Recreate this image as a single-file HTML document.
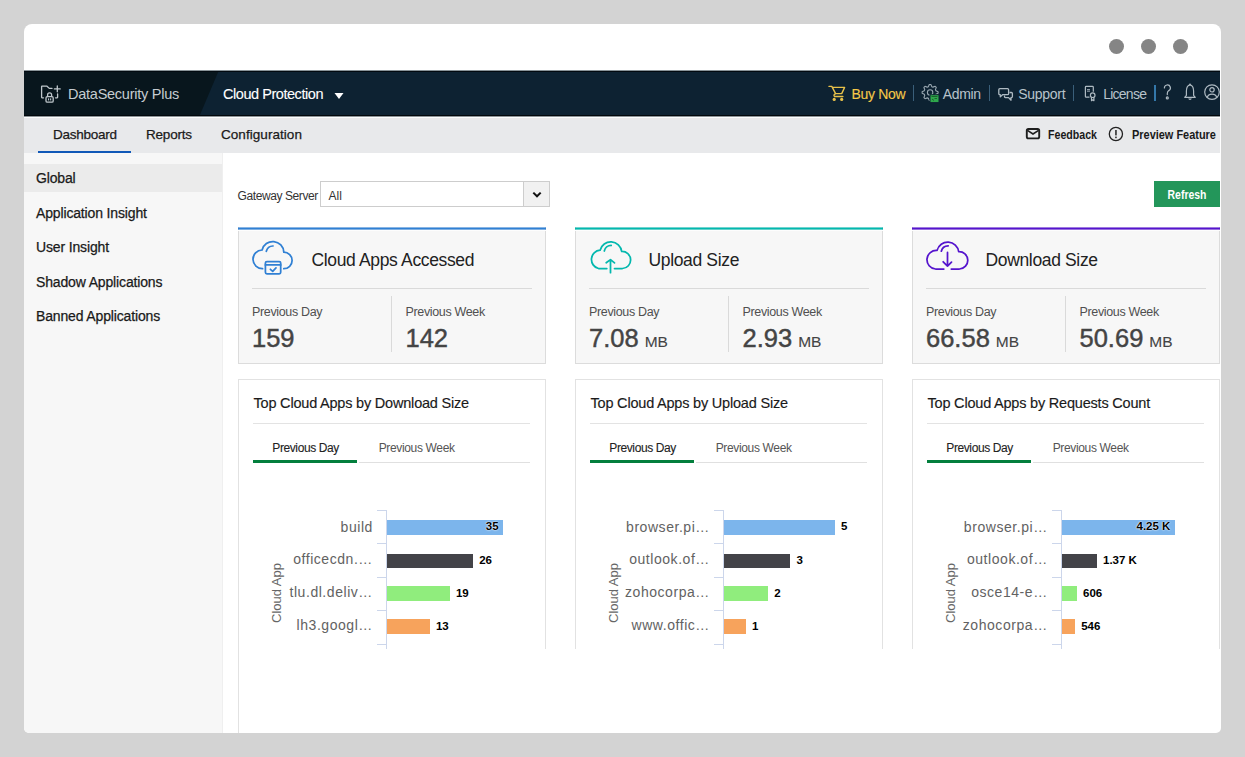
<!DOCTYPE html>
<html><head><meta charset="utf-8"><title>DataSecurity Plus</title>
<style>
*{margin:0;padding:0}
html,body{width:1245px;height:757px;overflow:hidden;background:#d3d3d3;font-family:"Liberation Sans",sans-serif}
</style></head><body>
<div style="position:absolute;left:24px;top:24px;width:1197px;height:709px;background:#fff;border-radius:8px 8px 5px 5px"></div>
<div style="position:absolute;left:1109.0px;top:39px;width:15px;height:15px;background:#858585;border-radius:50%"></div>
<div style="position:absolute;left:1141.0px;top:39px;width:15px;height:15px;background:#858585;border-radius:50%"></div>
<div style="position:absolute;left:1173.0px;top:39px;width:15px;height:15px;background:#858585;border-radius:50%"></div>
<div style="position:absolute;left:24px;top:70px;width:1196px;height:46px;background:#0d2232;"></div>
<svg style="position:absolute;left:24px;top:70px;" width="200" height="46" viewBox="0 0 200 46"><polygon points="0,0 195,0 175.5,46 0,46" fill="#08161d"/></svg>
<div style="position:absolute;left:24px;top:70px;width:1196px;height:1px;background:#8a9499;"></div>
<div style="position:absolute;left:24px;top:71px;width:1196px;height:1px;background:#020a10;"></div>
<svg style="position:absolute;left:36px;top:80px;" width="30" height="28" viewBox="0 0 30 28"><g fill="none" stroke="#bfc7cc" stroke-width="1.3" stroke-linecap="round" stroke-linejoin="round"><path d="M7.5 17.8 H6 Q5.6 17.8 5.6 17.3 V6.6 Q5.6 6.2 6 6.2 H11 L13.3 8.4 H16"/><path d="M21.6 14 V17.3 Q21.6 17.8 21.1 17.8 H19.5"/><path d="M21.3 6 V11.8 M18.4 8.9 H24.2"/><rect x="10" y="16.6" width="7.2" height="5.6" rx="1.3"/><path d="M11.6 16.5 V14.8 A2 2 0 0 1 15.6 14.8 V16.5"/></g><rect x="12" y="18.4" width="1.1" height="2" fill="#bfc7cc"/><rect x="14.1" y="18.4" width="1.1" height="2" fill="#bfc7cc"/></svg>
<div style="position:absolute;left:68.00px;top:94.02px;line-height:0;font-size:14.5px;color:#c5ccd1;white-space:nowrap;letter-spacing:-0.25px">DataSecurity Plus</div>
<div style="position:absolute;left:223.00px;top:94.22px;line-height:0;font-size:14.5px;color:#ffffff;white-space:nowrap;letter-spacing:-0.45px;-webkit-text-stroke:0.1px currentColor">Cloud Protection</div>
<svg style="position:absolute;left:334px;top:93px;" width="10" height="6" viewBox="0 0 10 6"><polygon points="0.5,0 9.5,0 5,6" fill="#fff"/></svg>
<svg style="position:absolute;left:826px;top:82px;" width="22" height="22" viewBox="0 0 22 22"><g fill="none" stroke="#e8c14a" stroke-width="1.4" stroke-linecap="round" stroke-linejoin="round"><path d="M3 4.4 H5.8 L9.6 11.6 Q7.2 12.6 8.4 14.5 H16.9"/><path d="M7.2 5.4 H18.6 L15.7 11.6 H9.6"/></g><circle cx="8.2" cy="17.4" r="1.6" fill="#e8c14a"/><circle cx="15.7" cy="17.4" r="1.6" fill="#e8c14a"/></svg>
<div style="position:absolute;left:851.50px;top:93.90px;line-height:0;font-size:14px;color:#f4c848;white-space:nowrap;letter-spacing:-0.3px;-webkit-text-stroke:0.12px currentColor">Buy Now</div>
<div style="position:absolute;left:913px;top:85px;width:1px;height:16px;background:#3a5f7a;"></div>
<svg style="position:absolute;left:918px;top:82px;" width="24" height="24" viewBox="0 0 24 24"><polygon points="20.06,9.70 20.06,11.27 17.94,12.26 17.48,13.37 18.29,15.56 17.19,16.67 14.99,15.87 13.88,16.33 12.90,18.46 11.33,18.46 10.34,16.34 9.23,15.88 7.04,16.69 5.93,15.59 6.73,13.39 6.27,12.28 4.14,11.30 4.14,9.73 6.26,8.74 6.72,7.63 5.91,5.44 7.01,4.33 9.21,5.13 10.32,4.67 11.30,2.54 12.87,2.54 13.86,4.66 14.97,5.12 17.16,4.31 18.27,5.41 17.47,7.61 17.93,8.72" fill="none" stroke="#98a6b0" stroke-width="1.1" stroke-linejoin="round"/><circle cx="12.1" cy="10.5" r="2.7" fill="none" stroke="#98a6b0" stroke-width="1.1"/><rect x="12" y="12.7" width="9" height="7.9" fill="#2ea84c" stroke="#0d2232" stroke-width="1"/><path d="M13.5 14.5 H19.5 M14 17 L16 18.5 M16.5 16.5 H19" stroke="#1a5a2a" stroke-width="0.9"/></svg>
<div style="position:absolute;left:942.80px;top:93.90px;line-height:0;font-size:14px;color:#b8c3ca;white-space:nowrap;letter-spacing:-0.35px">Admin</div>
<div style="position:absolute;left:988.5px;top:85px;width:1px;height:16px;background:#3a5f7a;"></div>
<svg style="position:absolute;left:994px;top:82px;" width="24" height="24" viewBox="0 0 24 24"><g fill="none" stroke="#aebac2" stroke-width="1.3" stroke-linejoin="round"><path d="M6 6.7 H13.6 Q14.6 6.7 14.6 7.7 V11.7 Q14.6 12.7 13.6 12.7 H8.5 L6.3 14.9 V12.7 H5.8 Q4.8 12.7 4.8 11.7 V7.7 Q4.8 6.7 5.8 6.7 Z"/><path d="M15.5 10.5 H17.4 Q18.4 10.5 18.4 11.5 V14.6 Q18.4 15.6 17.4 15.6 H17 V18.2 L14.6 15.6 H11.3 Q10.5 15.6 10.5 14.6 V13.5"/></g></svg>
<div style="position:absolute;left:1018.30px;top:93.90px;line-height:0;font-size:14px;color:#b8c3ca;white-space:nowrap;letter-spacing:-0.3px">Support</div>
<div style="position:absolute;left:1073px;top:85px;width:1px;height:16px;background:#3a5f7a;"></div>
<svg style="position:absolute;left:1080px;top:82px;" width="20" height="24" viewBox="0 0 20 24"><g fill="none" stroke="#aebac2" stroke-width="1.2" stroke-linejoin="round"><path d="M9.5 15.2 H6.2 Q5.4 15.2 5.4 14.4 V5.2 Q5.4 4.4 6.2 4.4 H12.5 Q13.3 4.4 13.3 5.2 V9.8"/><circle cx="12.7" cy="13.2" r="2.3"/><path d="M11.5 15.5 V18.7 L12.7 17.8 L13.9 18.7 V15.5"/></g><rect x="7" y="7.2" width="3" height="0.9" fill="#aebac2"/><rect x="7" y="8.7" width="3" height="0.9" fill="#aebac2"/></svg>
<div style="position:absolute;left:1103.20px;top:93.90px;line-height:0;font-size:14px;color:#b8c3ca;white-space:nowrap;letter-spacing:-0.75px">License</div>
<div style="position:absolute;left:1154px;top:85px;width:2px;height:16px;background:#3478aa;"></div>
<svg style="position:absolute;left:1160px;top:82px;" width="14" height="20" viewBox="0 0 14 20"><g fill="none" stroke="#aebac2" stroke-width="1.2" stroke-linecap="round"><path d="M4.4 6 A3 3 0 1 1 8.8 8.6 Q7.3 9.7 7.3 11.6 V12.6"/><circle cx="7.3" cy="15.9" r="1"/></g></svg>
<svg style="position:absolute;left:1182px;top:82px;" width="16" height="20" viewBox="0 0 16 20"><g fill="none" stroke="#aebac2" stroke-width="1.2" stroke-linejoin="round"><path d="M8 2.8 Q11.6 3.6 11.6 9 V13.3 L13.3 15.3 H2.7 L4.4 13.3 V9 Q4.4 3.6 8 2.8 Z"/></g><circle cx="8" cy="2.4" r="0.9" fill="#aebac2"/><path d="M6.2 16.6 H9.8 Q9.5 18 8 18 Q6.5 18 6.2 16.6 Z" fill="#aebac2"/></svg>
<svg style="position:absolute;left:1202px;top:82px;" width="18" height="20" viewBox="0 0 18 20"><g fill="none" stroke="#aebac2" stroke-width="1.2"><circle cx="10" cy="10.1" r="7.3"/><circle cx="10" cy="7.8" r="2.2"/><path d="M5.2 15.6 Q6 12.2 10 12.2 Q14 12.2 14.8 15.6"/></g></svg>
<div style="position:absolute;left:24px;top:115px;width:1196px;height:1px;background:#02080c;"></div>
<div style="position:absolute;left:24px;top:116px;width:1196px;height:1px;background:#8d9498;"></div>
<div style="position:absolute;left:24px;top:117px;width:1196px;height:1px;background:#fcfcfc;"></div>
<div style="position:absolute;left:24px;top:118px;width:1196px;height:35px;background:#e8e9eb;"></div>
<div style="position:absolute;left:53.00px;top:134.78px;line-height:0;font-size:13.5px;color:#1a1a1a;white-space:nowrap;letter-spacing:-0.25px;-webkit-text-stroke:0.25px currentColor">Dashboard</div>
<div style="position:absolute;left:146.00px;top:134.78px;line-height:0;font-size:13.5px;color:#1a1a1a;white-space:nowrap;letter-spacing:-0.2px;-webkit-text-stroke:0.25px currentColor">Reports</div>
<div style="position:absolute;left:221.00px;top:134.78px;line-height:0;font-size:13.5px;color:#1a1a1a;white-space:nowrap;letter-spacing:0.05px;-webkit-text-stroke:0.25px currentColor">Configuration</div>
<div style="position:absolute;left:38px;top:151px;width:93px;height:2.5px;background:#1159b8;"></div>
<svg style="position:absolute;left:1024px;top:124px;" width="18" height="18" viewBox="0 0 18 18"><rect x="2.8" y="5" width="12.4" height="9.4" rx="1.6" fill="none" stroke="#1e1e1e" stroke-width="1.9"/><path d="M3.4 6.4 L9 10 L14.6 6.4" fill="none" stroke="#1e1e1e" stroke-width="1.6"/></svg>
<div style="position:absolute;left:1048.00px;top:134.60px;line-height:0;font-size:12px;color:#1a1a1a;white-space:nowrap;font-weight:700;transform:scaleX(0.885);transform-origin:0 0">Feedback</div>
<svg style="position:absolute;left:1107px;top:125px;" width="18" height="18" viewBox="0 0 18 18"><circle cx="8.9" cy="9" r="6.6" fill="none" stroke="#222" stroke-width="1.3"/><rect x="8.2" y="5" width="1.5" height="5.4" fill="#222"/><rect x="8.2" y="11.6" width="1.5" height="1.6" fill="#222"/></svg>
<div style="position:absolute;left:1131.50px;top:134.60px;line-height:0;font-size:12px;color:#1a1a1a;white-space:nowrap;font-weight:700;transform:scaleX(0.912);transform-origin:0 0">Preview Feature</div>
<div style="position:absolute;left:24px;top:153px;width:199px;height:580px;background:#f7f7f7;border-bottom-left-radius:5px;border-right:1px solid #efefef;box-sizing:border-box"></div>
<div style="position:absolute;left:24px;top:164px;width:198px;height:28px;background:#ebebeb;"></div>
<div style="position:absolute;left:36.00px;top:178.30px;line-height:0;font-size:14px;color:#1a1a1a;white-space:nowrap;letter-spacing:-0.15px;-webkit-text-stroke:0.25px currentColor">Global</div>
<div style="position:absolute;left:36.00px;top:212.70px;line-height:0;font-size:14px;color:#1a1a1a;white-space:nowrap;letter-spacing:-0.15px;-webkit-text-stroke:0.25px currentColor">Application Insight</div>
<div style="position:absolute;left:36.00px;top:247.10px;line-height:0;font-size:14px;color:#1a1a1a;white-space:nowrap;letter-spacing:-0.15px;-webkit-text-stroke:0.25px currentColor">User Insight</div>
<div style="position:absolute;left:36.00px;top:281.50px;line-height:0;font-size:14px;color:#1a1a1a;white-space:nowrap;letter-spacing:-0.15px;-webkit-text-stroke:0.25px currentColor">Shadow Applications</div>
<div style="position:absolute;left:36.00px;top:315.90px;line-height:0;font-size:14px;color:#1a1a1a;white-space:nowrap;letter-spacing:-0.15px;-webkit-text-stroke:0.25px currentColor">Banned Applications</div>
<div style="position:absolute;left:237.50px;top:196.00px;line-height:0;font-size:12px;color:#333;white-space:nowrap;letter-spacing:-0.4px">Gateway Server</div>
<div style="position:absolute;left:320px;top:181px;width:230px;height:26px;background:#fff;border:1px solid #cdcdcd;box-sizing:border-box"></div>
<div style="position:absolute;left:523px;top:182px;width:26px;height:24px;background:#f1f1f1;border-left:1px solid #cdcdcd;box-sizing:border-box"></div>
<div style="position:absolute;left:328.50px;top:196.00px;line-height:0;font-size:12px;color:#333;white-space:nowrap">All</div>
<svg style="position:absolute;left:532px;top:191px;" width="10" height="8" viewBox="0 0 10 8"><polyline points="1.3,1.6 5,5.3 8.7,1.6" fill="none" stroke="#111" stroke-width="2"/></svg>
<div style="position:absolute;left:1154px;top:181px;width:66px;height:26px;background:#23965a;"></div>
<div style="position:absolute;left:987.00px;width:400px;text-align:center;top:195.30px;line-height:0;font-size:12px;color:#fff;white-space:nowrap;font-weight:700;transform:scaleX(0.87);transform-origin:50% 0">Refresh</div>
<div style="position:absolute;left:238px;top:227px;width:308px;height:137px;background:#f7f7f7;border:1px solid #dcdcdc;border-top:none;box-sizing:border-box"></div>
<div style="position:absolute;left:238px;top:227px;width:308px;height:1px;background:#3080d4;opacity:0.55"></div>
<div style="position:absolute;left:238px;top:228px;width:308px;height:1px;background:#3080d4;"></div>
<div style="position:absolute;left:238px;top:229px;width:308px;height:1px;background:#3080d4;opacity:0.6"></div>
<div style="position:absolute;left:238px;top:230px;width:308px;height:1px;background:#fdfdfd;"></div>
<svg style="position:absolute;left:246px;top:236px;" width="52" height="42" viewBox="0 0 52 42"><g fill="none" stroke="#3080d4" stroke-width="1.75" stroke-linecap="round" stroke-linejoin="round"><path d="M16.6 32.7 A9.3 9.3 0 0 1 16.1 14.0 A11 11 0 0 1 37.8 16.1 A8.3 8.3 0 0 1 37.8 32.7"/><path d="M20.3 15.3 A7 7 0 0 1 26.9 10"/><rect x="19.4" y="25.5" width="15.3" height="12.3" rx="1.5"/><path d="M19.4 28.9 H34.7 M24.4 33.3 L26.7 35.3 L30 31.9"/></g></svg>
<div style="position:absolute;left:311.50px;top:259.88px;line-height:0;font-size:17.5px;color:#222;white-space:nowrap;letter-spacing:-0.35px">Cloud Apps Accessed</div>
<div style="position:absolute;left:252px;top:288px;width:280px;height:1px;background:#dadada;"></div>
<div style="position:absolute;left:391px;top:296px;width:1px;height:56px;background:#dadada;"></div>
<div style="position:absolute;left:252.00px;top:312.12px;line-height:0;font-size:12.5px;color:#505050;white-space:nowrap;letter-spacing:-0.35px">Previous Day</div>
<div style="position:absolute;left:405.50px;top:312.12px;line-height:0;font-size:12.5px;color:#505050;white-space:nowrap;letter-spacing:-0.35px">Previous Week</div>
<div style="position:absolute;left:252.00px;top:338.07px;line-height:0;font-size:25.5px;color:#444;white-space:nowrap;-webkit-text-stroke:0.45px currentColor">159</div>
<div style="position:absolute;left:405.50px;top:338.07px;line-height:0;font-size:25.5px;color:#444;white-space:nowrap;-webkit-text-stroke:0.45px currentColor">142</div>
<div style="position:absolute;left:575px;top:227px;width:308px;height:137px;background:#f7f7f7;border:1px solid #dcdcdc;border-top:none;box-sizing:border-box"></div>
<div style="position:absolute;left:575px;top:227px;width:308px;height:1px;background:#03b8ae;opacity:0.55"></div>
<div style="position:absolute;left:575px;top:228px;width:308px;height:1px;background:#03b8ae;"></div>
<div style="position:absolute;left:575px;top:229px;width:308px;height:1px;background:#03b8ae;opacity:0.6"></div>
<div style="position:absolute;left:575px;top:230px;width:308px;height:1px;background:#fdfdfd;"></div>
<svg style="position:absolute;left:584px;top:236px;" width="52" height="42" viewBox="0 0 52 42"><g fill="none" stroke="#03b8ae" stroke-width="1.75" stroke-linecap="round" stroke-linejoin="round"><path d="M22.8 32.5 H14.5 A9.3 9.3 0 0 1 16.1 14.2 A11 11 0 0 1 37.7 15.5 A8.5 8.5 0 0 1 38.5 32.5 H30.5"/><path d="M20.3 15 A7 7 0 0 1 27.2 9.4"/><path d="M26.5 24 V36.7 M22.2 26.8 L26.5 23.6 L30.5 26.9"/></g></svg>
<div style="position:absolute;left:648.50px;top:259.88px;line-height:0;font-size:17.5px;color:#222;white-space:nowrap;letter-spacing:-0.35px">Upload Size</div>
<div style="position:absolute;left:589px;top:288px;width:280px;height:1px;background:#dadada;"></div>
<div style="position:absolute;left:728px;top:296px;width:1px;height:56px;background:#dadada;"></div>
<div style="position:absolute;left:589.00px;top:312.12px;line-height:0;font-size:12.5px;color:#505050;white-space:nowrap;letter-spacing:-0.35px">Previous Day</div>
<div style="position:absolute;left:742.50px;top:312.12px;line-height:0;font-size:12.5px;color:#505050;white-space:nowrap;letter-spacing:-0.35px">Previous Week</div>
<div style="position:absolute;left:589.00px;top:338.07px;line-height:0;font-size:25.5px;color:#444;white-space:nowrap;-webkit-text-stroke:0.45px currentColor">7.08<span style="font-size:15.5px;margin-left:6px;-webkit-text-stroke:0.1px currentColor">MB</span></div>
<div style="position:absolute;left:742.50px;top:338.07px;line-height:0;font-size:25.5px;color:#444;white-space:nowrap;-webkit-text-stroke:0.45px currentColor">2.93<span style="font-size:15.5px;margin-left:6px;-webkit-text-stroke:0.1px currentColor">MB</span></div>
<div style="position:absolute;left:912px;top:227px;width:308px;height:137px;background:#f7f7f7;border:1px solid #dcdcdc;border-top:none;box-sizing:border-box"></div>
<div style="position:absolute;left:912px;top:227px;width:308px;height:1px;background:#5514cd;opacity:0.55"></div>
<div style="position:absolute;left:912px;top:228px;width:308px;height:1px;background:#5514cd;"></div>
<div style="position:absolute;left:912px;top:229px;width:308px;height:1px;background:#5514cd;opacity:0.6"></div>
<div style="position:absolute;left:912px;top:230px;width:308px;height:1px;background:#fdfdfd;"></div>
<svg style="position:absolute;left:921px;top:236px;" width="52" height="42" viewBox="0 0 52 42"><g fill="none" stroke="#5514cd" stroke-width="1.75" stroke-linecap="round" stroke-linejoin="round"><path d="M22.8 33 H14.5 A9.3 9.3 0 0 1 16.1 14.4 A11 11 0 0 1 37.7 15.7 A8.5 8.5 0 0 1 38.5 33 H30.3"/><path d="M20.3 15.2 A7 7 0 0 1 27.2 9.8"/><path d="M26.5 16.4 V30 M22.2 25.8 L26.5 30.1 L30.5 26.1"/></g></svg>
<div style="position:absolute;left:985.50px;top:259.88px;line-height:0;font-size:17.5px;color:#222;white-space:nowrap;letter-spacing:-0.35px">Download Size</div>
<div style="position:absolute;left:926px;top:288px;width:280px;height:1px;background:#dadada;"></div>
<div style="position:absolute;left:1065px;top:296px;width:1px;height:56px;background:#dadada;"></div>
<div style="position:absolute;left:926.00px;top:312.12px;line-height:0;font-size:12.5px;color:#505050;white-space:nowrap;letter-spacing:-0.35px">Previous Day</div>
<div style="position:absolute;left:1079.50px;top:312.12px;line-height:0;font-size:12.5px;color:#505050;white-space:nowrap;letter-spacing:-0.35px">Previous Week</div>
<div style="position:absolute;left:926.00px;top:338.07px;line-height:0;font-size:25.5px;color:#444;white-space:nowrap;-webkit-text-stroke:0.45px currentColor">66.58<span style="font-size:15.5px;margin-left:6px;-webkit-text-stroke:0.1px currentColor">MB</span></div>
<div style="position:absolute;left:1079.50px;top:338.07px;line-height:0;font-size:25.5px;color:#444;white-space:nowrap;-webkit-text-stroke:0.45px currentColor">50.69<span style="font-size:15.5px;margin-left:6px;-webkit-text-stroke:0.1px currentColor">MB</span></div>
<div style="position:absolute;left:238px;top:379px;width:308px;height:270px;background:#fff;border:1px solid #e2e2e2;border-bottom:none;box-sizing:border-box"></div>
<div style="position:absolute;left:253.50px;top:403.12px;line-height:0;font-size:14.5px;color:#1a1a1a;white-space:nowrap;letter-spacing:-0.2px;-webkit-text-stroke:0.15px currentColor">Top Cloud Apps by Download Size</div>
<div style="position:absolute;left:253px;top:422.5px;width:277px;height:1px;background:#e3e3e3;"></div>
<div style="position:absolute;left:272.30px;top:447.80px;line-height:0;font-size:12px;color:#222;white-space:nowrap;letter-spacing:-0.4px;-webkit-text-stroke:0.1px currentColor">Previous Day</div>
<div style="position:absolute;left:378.70px;top:447.80px;line-height:0;font-size:12px;color:#555;white-space:nowrap;letter-spacing:-0.35px">Previous Week</div>
<div style="position:absolute;left:359px;top:462px;width:171px;height:1px;background:#e0e0e0;"></div>
<div style="position:absolute;left:253px;top:460px;width:104px;height:3px;background:#037f3d;"></div>
<div style="position:absolute;left:386.2px;top:509.5px;width:1px;height:139.5px;background:#ccd6eb;"></div>
<div style="position:absolute;left:377.2px;top:509.5px;width:9px;height:1px;background:#ccd6eb;"></div>
<div style="position:absolute;left:377.2px;top:543.0px;width:9px;height:1px;background:#ccd6eb;"></div>
<div style="position:absolute;left:377.2px;top:576.5px;width:9px;height:1px;background:#ccd6eb;"></div>
<div style="position:absolute;left:377.2px;top:610.0px;width:9px;height:1px;background:#ccd6eb;"></div>
<div style="position:absolute;left:377.2px;top:643.5px;width:9px;height:1px;background:#ccd6eb;"></div>
<div style="position:absolute;left:386.7px;top:519.8px;width:116.4px;height:14.8px;background:#7cb5ec;"></div>
<div style="position:absolute;right:872.10px;top:526.90px;line-height:0;font-size:14px;color:#626262;white-space:nowrap;letter-spacing:0.55px">build</div>
<div style="position:absolute;right:746.42px;top:526.38px;line-height:0;font-size:11.5px;color:#000;white-space:nowrap;font-weight:700;text-shadow:0 0 2px #fff,0 0 1px #fff">35</div>
<div style="position:absolute;left:386.7px;top:553.6px;width:86.5px;height:14.8px;background:#434348;"></div>
<div style="position:absolute;right:872.10px;top:559.20px;line-height:0;font-size:14px;color:#626262;white-space:nowrap;letter-spacing:0.55px">officecdn.…</div>
<div style="position:absolute;left:479.15px;top:560.18px;line-height:0;font-size:11.5px;color:#000;white-space:nowrap;font-weight:700;text-shadow:0 0 2px #fff,0 0 1px #fff">26</div>
<div style="position:absolute;left:386.7px;top:586.3px;width:63.2px;height:14.8px;background:#90ed7d;"></div>
<div style="position:absolute;right:872.10px;top:591.90px;line-height:0;font-size:14px;color:#626262;white-space:nowrap;letter-spacing:0.55px">tlu.dl.deliv…</div>
<div style="position:absolute;left:455.88px;top:592.88px;line-height:0;font-size:11.5px;color:#000;white-space:nowrap;font-weight:700;text-shadow:0 0 2px #fff,0 0 1px #fff">19</div>
<div style="position:absolute;left:386.7px;top:619.4px;width:43.2px;height:14.8px;background:#f7a35c;"></div>
<div style="position:absolute;right:872.10px;top:624.90px;line-height:0;font-size:14px;color:#626262;white-space:nowrap;letter-spacing:0.55px">lh3.googl…</div>
<div style="position:absolute;left:435.93px;top:625.98px;line-height:0;font-size:11.5px;color:#000;white-space:nowrap;font-weight:700;text-shadow:0 0 2px #fff,0 0 1px #fff">13</div>
<div style="position:absolute;left:236.7px;top:585px;width:80px;height:16px;line-height:16px;text-align:center;font-size:13px;color:#666;transform:rotate(-90deg);white-space:nowrap">Cloud App</div>
<div style="position:absolute;left:575px;top:379px;width:308px;height:270px;background:#fff;border:1px solid #e2e2e2;border-bottom:none;box-sizing:border-box"></div>
<div style="position:absolute;left:590.50px;top:403.12px;line-height:0;font-size:14.5px;color:#1a1a1a;white-space:nowrap;letter-spacing:-0.2px;-webkit-text-stroke:0.15px currentColor">Top Cloud Apps by Upload Size</div>
<div style="position:absolute;left:590px;top:422.5px;width:277px;height:1px;background:#e3e3e3;"></div>
<div style="position:absolute;left:609.30px;top:447.80px;line-height:0;font-size:12px;color:#222;white-space:nowrap;letter-spacing:-0.4px;-webkit-text-stroke:0.1px currentColor">Previous Day</div>
<div style="position:absolute;left:715.70px;top:447.80px;line-height:0;font-size:12px;color:#555;white-space:nowrap;letter-spacing:-0.35px">Previous Week</div>
<div style="position:absolute;left:696px;top:462px;width:171px;height:1px;background:#e0e0e0;"></div>
<div style="position:absolute;left:590px;top:460px;width:104px;height:3px;background:#037f3d;"></div>
<div style="position:absolute;left:723.2px;top:509.5px;width:1px;height:139.5px;background:#ccd6eb;"></div>
<div style="position:absolute;left:714.2px;top:509.5px;width:9px;height:1px;background:#ccd6eb;"></div>
<div style="position:absolute;left:714.2px;top:543.0px;width:9px;height:1px;background:#ccd6eb;"></div>
<div style="position:absolute;left:714.2px;top:576.5px;width:9px;height:1px;background:#ccd6eb;"></div>
<div style="position:absolute;left:714.2px;top:610.0px;width:9px;height:1px;background:#ccd6eb;"></div>
<div style="position:absolute;left:714.2px;top:643.5px;width:9px;height:1px;background:#ccd6eb;"></div>
<div style="position:absolute;left:723.7px;top:519.8px;width:111.3px;height:14.8px;background:#7cb5ec;"></div>
<div style="position:absolute;right:535.10px;top:526.90px;line-height:0;font-size:14px;color:#626262;white-space:nowrap;letter-spacing:0.55px">browser.pi…</div>
<div style="position:absolute;left:841.00px;top:526.38px;line-height:0;font-size:11.5px;color:#000;white-space:nowrap;font-weight:700;text-shadow:0 0 2px #fff,0 0 1px #fff">5</div>
<div style="position:absolute;left:723.7px;top:553.6px;width:66.8px;height:14.8px;background:#434348;"></div>
<div style="position:absolute;right:535.10px;top:559.20px;line-height:0;font-size:14px;color:#626262;white-space:nowrap;letter-spacing:0.55px">outlook.of…</div>
<div style="position:absolute;left:796.48px;top:560.18px;line-height:0;font-size:11.5px;color:#000;white-space:nowrap;font-weight:700;text-shadow:0 0 2px #fff,0 0 1px #fff">3</div>
<div style="position:absolute;left:723.7px;top:586.3px;width:44.5px;height:14.8px;background:#90ed7d;"></div>
<div style="position:absolute;right:535.10px;top:591.90px;line-height:0;font-size:14px;color:#626262;white-space:nowrap;letter-spacing:0.55px">zohocorpa…</div>
<div style="position:absolute;left:774.22px;top:592.88px;line-height:0;font-size:11.5px;color:#000;white-space:nowrap;font-weight:700;text-shadow:0 0 2px #fff,0 0 1px #fff">2</div>
<div style="position:absolute;left:723.7px;top:619.4px;width:22.3px;height:14.8px;background:#f7a35c;"></div>
<div style="position:absolute;right:535.10px;top:624.90px;line-height:0;font-size:14px;color:#626262;white-space:nowrap;letter-spacing:0.55px">www.offic…</div>
<div style="position:absolute;left:751.96px;top:625.98px;line-height:0;font-size:11.5px;color:#000;white-space:nowrap;font-weight:700;text-shadow:0 0 2px #fff,0 0 1px #fff">1</div>
<div style="position:absolute;left:573.7px;top:585px;width:80px;height:16px;line-height:16px;text-align:center;font-size:13px;color:#666;transform:rotate(-90deg);white-space:nowrap">Cloud App</div>
<div style="position:absolute;left:912px;top:379px;width:308px;height:270px;background:#fff;border:1px solid #e2e2e2;border-bottom:none;box-sizing:border-box"></div>
<div style="position:absolute;left:927.50px;top:403.12px;line-height:0;font-size:14.5px;color:#1a1a1a;white-space:nowrap;letter-spacing:-0.2px;-webkit-text-stroke:0.15px currentColor">Top Cloud Apps by Requests Count</div>
<div style="position:absolute;left:927px;top:422.5px;width:277px;height:1px;background:#e3e3e3;"></div>
<div style="position:absolute;left:946.30px;top:447.80px;line-height:0;font-size:12px;color:#222;white-space:nowrap;letter-spacing:-0.4px;-webkit-text-stroke:0.1px currentColor">Previous Day</div>
<div style="position:absolute;left:1052.70px;top:447.80px;line-height:0;font-size:12px;color:#555;white-space:nowrap;letter-spacing:-0.35px">Previous Week</div>
<div style="position:absolute;left:1033px;top:462px;width:171px;height:1px;background:#e0e0e0;"></div>
<div style="position:absolute;left:927px;top:460px;width:104px;height:3px;background:#037f3d;"></div>
<div style="position:absolute;left:1061px;top:509.5px;width:1px;height:139.5px;background:#ccd6eb;"></div>
<div style="position:absolute;left:1052px;top:509.5px;width:9px;height:1px;background:#ccd6eb;"></div>
<div style="position:absolute;left:1052px;top:543.0px;width:9px;height:1px;background:#ccd6eb;"></div>
<div style="position:absolute;left:1052px;top:576.5px;width:9px;height:1px;background:#ccd6eb;"></div>
<div style="position:absolute;left:1052px;top:610.0px;width:9px;height:1px;background:#ccd6eb;"></div>
<div style="position:absolute;left:1052px;top:643.5px;width:9px;height:1px;background:#ccd6eb;"></div>
<div style="position:absolute;left:1061.5px;top:519.8px;width:113.4px;height:14.8px;background:#7cb5ec;"></div>
<div style="position:absolute;right:197.30px;top:526.90px;line-height:0;font-size:14px;color:#626262;white-space:nowrap;letter-spacing:0.55px">browser.pi…</div>
<div style="position:absolute;right:74.60px;top:526.38px;line-height:0;font-size:11.5px;color:#000;white-space:nowrap;font-weight:700;text-shadow:0 0 2px #fff,0 0 1px #fff">4.25 K</div>
<div style="position:absolute;left:1061.5px;top:553.6px;width:35.5px;height:14.8px;background:#434348;"></div>
<div style="position:absolute;right:197.30px;top:559.20px;line-height:0;font-size:14px;color:#626262;white-space:nowrap;letter-spacing:0.55px">outlook.of…</div>
<div style="position:absolute;left:1103.00px;top:560.18px;line-height:0;font-size:11.5px;color:#000;white-space:nowrap;font-weight:700;text-shadow:0 0 2px #fff,0 0 1px #fff">1.37 K</div>
<div style="position:absolute;left:1061.5px;top:586.3px;width:15.5px;height:14.8px;background:#90ed7d;"></div>
<div style="position:absolute;right:197.30px;top:591.90px;line-height:0;font-size:14px;color:#626262;white-space:nowrap;letter-spacing:0.55px">osce14-e…</div>
<div style="position:absolute;left:1083.00px;top:592.88px;line-height:0;font-size:11.5px;color:#000;white-space:nowrap;font-weight:700;text-shadow:0 0 2px #fff,0 0 1px #fff">606</div>
<div style="position:absolute;left:1061.5px;top:619.4px;width:13.7px;height:14.8px;background:#f7a35c;"></div>
<div style="position:absolute;right:197.30px;top:624.90px;line-height:0;font-size:14px;color:#626262;white-space:nowrap;letter-spacing:0.55px">zohocorpa…</div>
<div style="position:absolute;left:1081.20px;top:625.98px;line-height:0;font-size:11.5px;color:#000;white-space:nowrap;font-weight:700;text-shadow:0 0 2px #fff,0 0 1px #fff">546</div>
<div style="position:absolute;left:910.7px;top:585px;width:80px;height:16px;line-height:16px;text-align:center;font-size:13px;color:#666;transform:rotate(-90deg);white-space:nowrap">Cloud App</div>
<div style="position:absolute;left:238px;top:649px;width:1px;height:84px;background:#e2e2e2;"></div>
</body></html>
